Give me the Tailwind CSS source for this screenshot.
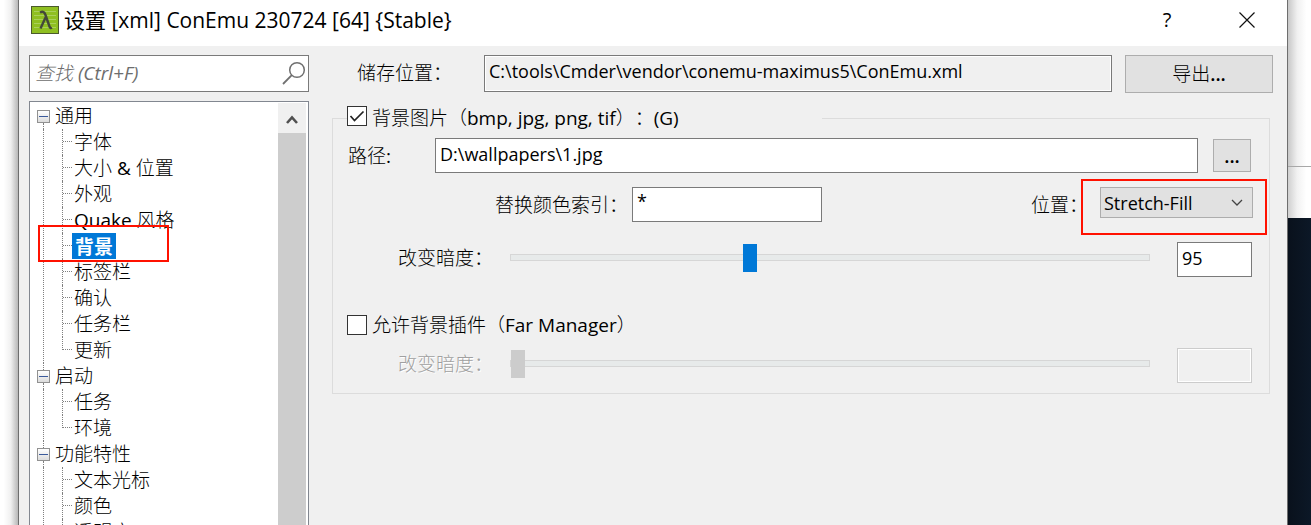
<!DOCTYPE html>
<html lang="zh-CN">
<head>
<meta charset="utf-8">
<title>设置 [xml] ConEmu 230724 [64] {Stable}</title>
<script src="https://cdn.jsdelivr.net/npm/@tailwindcss/browser@4"></script>
</head>
<body class="flex h-screen overflow-hidden bg-white font-['Open_Sans','Noto_Sans_CJK_SC_Light','Noto_Sans_CJK_SC',sans-serif] text-[19px] leading-6 text-black [text-spacing-trim:space-all]">
<div class="w-[18px] shrink-0 bg-linear-to-r from-white from-20% via-[#f0f0f0] via-60% to-[#b8b8b8]"></div>

<main class="flex min-w-0 flex-1 flex-col border-x border-x-[#6e6e6e] bg-[#f0f0f0]">
  <header class="flex h-[46px] shrink-0 items-center bg-white pr-7 pb-1.5 pl-3">
    <svg class="mr-[5px] size-7 shrink-0" viewBox="0 0 28 28" aria-hidden="true">
      <rect x=".5" y=".5" width="27" height="27" fill="#8fbf21" stroke="#4b5a2c"/>
      <path d="M3 5.500h22M3 9.500h22M3 13.500h22M3 17.500h22M3 21.500h22" stroke="#a9d05a"/>
      <path d="M9 6.500c3-1.500 4.500-.5 5.500 2.500l4 11.500c.5 1.500 1.200 2 2.500 1.300M14.500 11.500L9.500 22.500" fill="none" stroke="#43483a" stroke-width="2.400"/>
    </svg>
    <h1 class="flex-1 font-['Open_Sans','Noto_Sans_CJK_SC',sans-serif] text-[21px] whitespace-nowrap">设置 [xml] ConEmu 230724 [64] {Stable}</h1>
    <button class="mr-14 flex h-8 w-6 items-center justify-center text-xl" aria-label="帮助">?</button>
    <button class="flex size-6 items-center justify-center" aria-label="关闭">
      <svg class="size-4" viewBox="0 0 16 16"><path d="M.5.5l15 15M15.500.5l-15 15" stroke="#111" stroke-width="1.200"/></svg>
    </button>
  </header>

  <div class="flex min-h-0 flex-1 pl-2.5">
    <aside class="flex w-[280px] shrink-0 flex-col gap-[9px] pt-[9px]">
      <label class="flex h-[37px] shrink-0 items-center border border-[#7a7a7a] bg-white pr-0.5 pb-0.5 pl-[5px]">
        <input type="search" aria-label="查找" placeholder="查找 (Ctrl+F)" class="min-w-0 flex-1 italic outline-none placeholder:text-[#6d6d6d]">
        <svg class="size-6" viewBox="0 0 24 24" fill="none" stroke="#707070" aria-hidden="true"><circle cx="15" cy="9" r="7.300" stroke-width="1.500"/><path d="M9.800 14.200L1 23" stroke-width="1.800"/></svg>
      </label>

      <div class="flex min-h-0 flex-1 border border-b-0 border-[#828790] bg-white pt-px pr-0.5">
        <ul class="min-w-0 flex-1 overflow-hidden whitespace-nowrap" role="tree">
          <li>
            <div class="flex h-[26px] items-center pl-[7px]">
              <span class="flex h-full w-[13px] flex-col items-center"><i class="flex-1"></i><button aria-label="折叠 通用" class="flex size-[13px] items-center justify-center border border-[#919191] bg-linear-to-b from-white to-[#dcdcdc]"><i class="h-px w-[9px] bg-[#3b5a9b]"></i></button><i class="flex-1 border-l border-dotted border-[#808080]"></i></span>
              <span class="ml-[5px]">通用</span>
            </div>
            <ul class="ml-[13px] border-l border-dotted border-[#808080] pl-[18px]">
              <li class="flex h-[26px] items-center"><span class="h-full w-2.5 border-l border-dotted border-[#808080]"><i class="block h-1/2 border-b border-dotted border-[#808080]"></i></span><span class="px-0.5">字体</span></li>
              <li class="flex h-[26px] items-center"><span class="h-full w-2.5 border-l border-dotted border-[#808080]"><i class="block h-1/2 border-b border-dotted border-[#808080]"></i></span><span class="px-0.5">大小 &amp; 位置</span></li>
              <li class="flex h-[26px] items-center"><span class="h-full w-2.5 border-l border-dotted border-[#808080]"><i class="block h-1/2 border-b border-dotted border-[#808080]"></i></span><span class="px-0.5">外观</span></li>
              <li class="flex h-[26px] items-center"><span class="h-full w-2.5 border-l border-dotted border-[#808080]"><i class="block h-1/2 border-b border-dotted border-[#808080]"></i></span><span class="px-0.5">Quake 风格</span></li>
              <li class="relative flex h-[26px] items-center" aria-selected="true"><span class="h-full w-2.5 border-l border-dotted border-[#808080]"><i class="block h-1/2 border-b border-dotted border-[#808080]"></i></span><span class="flex h-full items-center bg-[#0078d7] px-[3px] font-['Noto_Sans_CJK_SC'] font-bold text-white">背景</span>
                <span class="absolute -top-2 -left-6 h-[37px] w-[131px] border-2 border-[#ff1100]"></span></li>
              <li class="flex h-[26px] items-center"><span class="h-full w-2.5 border-l border-dotted border-[#808080]"><i class="block h-1/2 border-b border-dotted border-[#808080]"></i></span><span class="px-0.5">标签栏</span></li>
              <li class="flex h-[26px] items-center"><span class="h-full w-2.5 border-l border-dotted border-[#808080]"><i class="block h-1/2 border-b border-dotted border-[#808080]"></i></span><span class="px-0.5">确认</span></li>
              <li class="flex h-[26px] items-center"><span class="h-full w-2.5 border-l border-dotted border-[#808080]"><i class="block h-1/2 border-b border-dotted border-[#808080]"></i></span><span class="px-0.5">任务栏</span></li>
              <li class="flex h-[26px] items-center"><span class="h-full w-2.5"><i class="block h-1/2 border-b border-l border-dotted border-[#808080]"></i></span><span class="px-0.5">更新</span></li>
            </ul>
          </li>
          <li>
            <div class="flex h-[26px] items-center pl-[7px]">
              <span class="flex h-full w-[13px] flex-col items-center"><i class="flex-1 border-l border-dotted border-[#808080]"></i><button aria-label="折叠 启动" class="flex size-[13px] items-center justify-center border border-[#919191] bg-linear-to-b from-white to-[#dcdcdc]"><i class="h-px w-[9px] bg-[#3b5a9b]"></i></button><i class="flex-1 border-l border-dotted border-[#808080]"></i></span>
              <span class="ml-[5px]">启动</span>
            </div>
            <ul class="ml-[13px] border-l border-dotted border-[#808080] pl-[18px]">
              <li class="flex h-[26px] items-center"><span class="h-full w-2.5 border-l border-dotted border-[#808080]"><i class="block h-1/2 border-b border-dotted border-[#808080]"></i></span><span class="px-0.5">任务</span></li>
              <li class="flex h-[26px] items-center"><span class="h-full w-2.5"><i class="block h-1/2 border-b border-l border-dotted border-[#808080]"></i></span><span class="px-0.5">环境</span></li>
            </ul>
          </li>
          <li>
            <div class="flex h-[26px] items-center pl-[7px]">
              <span class="flex h-full w-[13px] flex-col items-center"><i class="flex-1 border-l border-dotted border-[#808080]"></i><button aria-label="折叠 功能特性" class="flex size-[13px] items-center justify-center border border-[#919191] bg-linear-to-b from-white to-[#dcdcdc]"><i class="h-px w-[9px] bg-[#3b5a9b]"></i></button><i class="flex-1 border-l border-dotted border-[#808080]"></i></span>
              <span class="ml-[5px]">功能特性</span>
            </div>
            <ul class="ml-[13px] border-l border-dotted border-[#808080] pl-[18px]">
              <li class="flex h-[26px] items-center"><span class="h-full w-2.5 border-l border-dotted border-[#808080]"><i class="block h-1/2 border-b border-dotted border-[#808080]"></i></span><span class="px-0.5">文本光标</span></li>
              <li class="flex h-[26px] items-center"><span class="h-full w-2.5 border-l border-dotted border-[#808080]"><i class="block h-1/2 border-b border-dotted border-[#808080]"></i></span><span class="px-0.5">颜色</span></li>
              <li class="flex h-[26px] items-center"><span class="h-full w-2.5 border-l border-dotted border-[#808080]"><i class="block h-1/2 border-b border-dotted border-[#808080]"></i></span><span class="px-0.5">透明度</span></li>
            </ul>
          </li>
        </ul>
        <div class="flex w-7 flex-col bg-[#f0f0f0]">
          <button class="flex h-[30px] items-center justify-center" aria-label="向上滚动"><svg class="mt-1 h-2.5 w-3" viewBox="0 0 12 10"><path d="M1 8l5-5.500L11 8" fill="none" stroke="#505050" stroke-width="2.600"/></svg></button>
          <div class="flex-1 bg-[#cdcdcd]"></div>
        </div>
      </div>
    </aside>

    <section class="flex min-w-0 flex-1 flex-col pt-[9px] pr-3.5 pl-[23px]">
      <div class="flex items-start">
        <label for="store" class="w-[152px] shrink-0 pt-1.5 pl-[25px]">储存位置：</label>
        <input id="store" readonly value="C:\tools\Cmder\vendor\conemu-maximus5\ConEmu.xml" class="h-[37px] min-w-0 flex-1 border border-[#7a7a7a] bg-[#f0f0f0] px-1 pb-1.5 text-lg inset-ring inset-ring-white outline-none">
        <button class="ml-[13px] h-[38px] w-[148px] border border-[#adadad] bg-[#e1e1e1]">导出<span class="font-semibold">...</span></button>
      </div>

      <fieldset class="mt-3 mr-[3px] min-w-0 border border-[#dcdcdc] pr-[17px] pb-2.5">
        <legend class="ml-3.5 w-[475px]">
          <label class="flex h-[26px] items-center gap-[5px] whitespace-nowrap">
            <span class="relative -mt-1 flex size-5"><input type="checkbox" checked class="peer size-5 appearance-none border border-[#333] bg-white"><svg class="pointer-events-none absolute inset-0 hidden size-5 peer-checked:block" viewBox="0 0 20 20"><path d="M3.500 10l4 4.500 9-9" fill="none" stroke="#222" stroke-width="1.700"/></svg></span>
            背景图片（bmp, jpg, png, tif）：(G)
          </label>
        </legend>
        <div class="mt-[7px] flex items-start">
          <label for="path" class="w-[102px] shrink-0 pt-1.5 pl-[15px]">路径:</label>
          <input id="path" value="D:\wallpapers\1.jpg" class="h-[35px] min-w-0 flex-1 border border-[#7a7a7a] bg-white px-1 pb-1 text-lg outline-none">
          <button class="mt-px mr-px ml-[15px] h-[33px] w-[38px] border border-[#adadad] bg-[#e1e1e1] font-semibold" aria-label="浏览">...</button>
        </div>
        <div class="mt-3.5 flex items-start">
          <label for="colors" class="w-[299px] shrink-0 pt-1.5 pl-[162px] whitespace-nowrap">替换颜色索引：</label>
          <input id="colors" value="*" class="h-[35px] w-[190px] min-w-0 border border-[#7a7a7a] bg-white px-1 pb-2 text-lg outline-none">
          <label for="place" class="ml-auto w-[69px] shrink-0 pt-1.5 whitespace-nowrap">位置：</label>
          <div class="relative -mr-px flex h-[31px] w-[153px] items-center">
            <select id="place" class="size-full appearance-none border border-[#adadad] bg-[#e1e1e1] pl-[3px] text-lg outline-none"><option>Stretch-Fill</option></select>
            <svg class="pointer-events-none absolute right-2.5 h-2 w-3" viewBox="0 0 12 8"><path d="M1 1l5 5 5-5" fill="none" stroke="#444" stroke-width="1.300"/></svg>
            <span class="pointer-events-none absolute -top-2 -left-[19px] h-14 w-[186px] border-2 border-[#ff1100]"></span>
          </div>
        </div>
        <div class="mt-5 flex items-start">
          <label for="dark" class="w-[177px] shrink-0 pt-1 pl-[65px] whitespace-nowrap">改变暗度：</label>
          <input id="dark" type="range" min="0" max="255" value="95" class="mt-px h-7 min-w-0 flex-1 appearance-none bg-transparent [&::-webkit-slider-runnable-track]:h-[7px] [&::-webkit-slider-runnable-track]:border [&::-webkit-slider-runnable-track]:border-[#d6d6d6] [&::-webkit-slider-runnable-track]:bg-[#e7eaea] [&::-webkit-slider-thumb]:-mt-[11px] [&::-webkit-slider-thumb]:h-7 [&::-webkit-slider-thumb]:w-3.5 [&::-webkit-slider-thumb]:appearance-none [&::-webkit-slider-thumb]:bg-[#0078d7]">
          <input aria-label="暗度值" value="95" class="ml-[27px] h-[35px] w-[75px] border border-[#7a7a7a] bg-white px-1 pb-1 text-lg outline-none">
        </div>
        <label class="mt-[35px] ml-3.5 flex h-[26px] w-fit items-center gap-[5px] whitespace-nowrap">
          <input type="checkbox" class="size-5 appearance-none border border-[#333] bg-white">
          允许背景插件（Far Manager）
        </label>
        <div class="mt-2.5 flex items-start">
          <label for="plugin-dark" class="w-[177px] shrink-0 pt-1 pl-[65px] whitespace-nowrap text-[#a0a0a0] text-shadow-[1px_1px_0_#fff]">改变暗度：</label>
          <input id="plugin-dark" type="range" min="0" max="255" value="0" disabled class="mt-px h-7 min-w-0 flex-1 appearance-none bg-transparent [&::-webkit-slider-runnable-track]:h-[7px] [&::-webkit-slider-runnable-track]:border [&::-webkit-slider-runnable-track]:border-[#d6d6d6] [&::-webkit-slider-runnable-track]:bg-[#e7eaea] [&::-webkit-slider-thumb]:-mt-[11px] [&::-webkit-slider-thumb]:h-7 [&::-webkit-slider-thumb]:w-3.5 [&::-webkit-slider-thumb]:appearance-none [&::-webkit-slider-thumb]:bg-[#cccccc]">
          <input aria-label="插件暗度值" disabled class="ml-[27px] h-[35px] w-[75px] border border-[#cccccc] bg-[#f0f0f0] px-1 inset-ring inset-ring-white">
        </div>
      </fieldset>
    </section>
  </div>
</main>

<div class="flex w-[23px] shrink-0 flex-col">
  <div class="h-[167px] border-b border-[#a8a8a8] bg-linear-to-r from-[#c8c8c8] via-[#f0f0f0] via-40% to-white to-80%"></div>
  <div class="h-[51px] bg-linear-to-r from-[#d0d0d0] via-[#f2f2f2] via-40% to-white to-80%"></div>
  <div class="flex-1 bg-linear-to-r from-[#09111c] to-[#0c1827]"></div>
</div>
</body>
</html>
